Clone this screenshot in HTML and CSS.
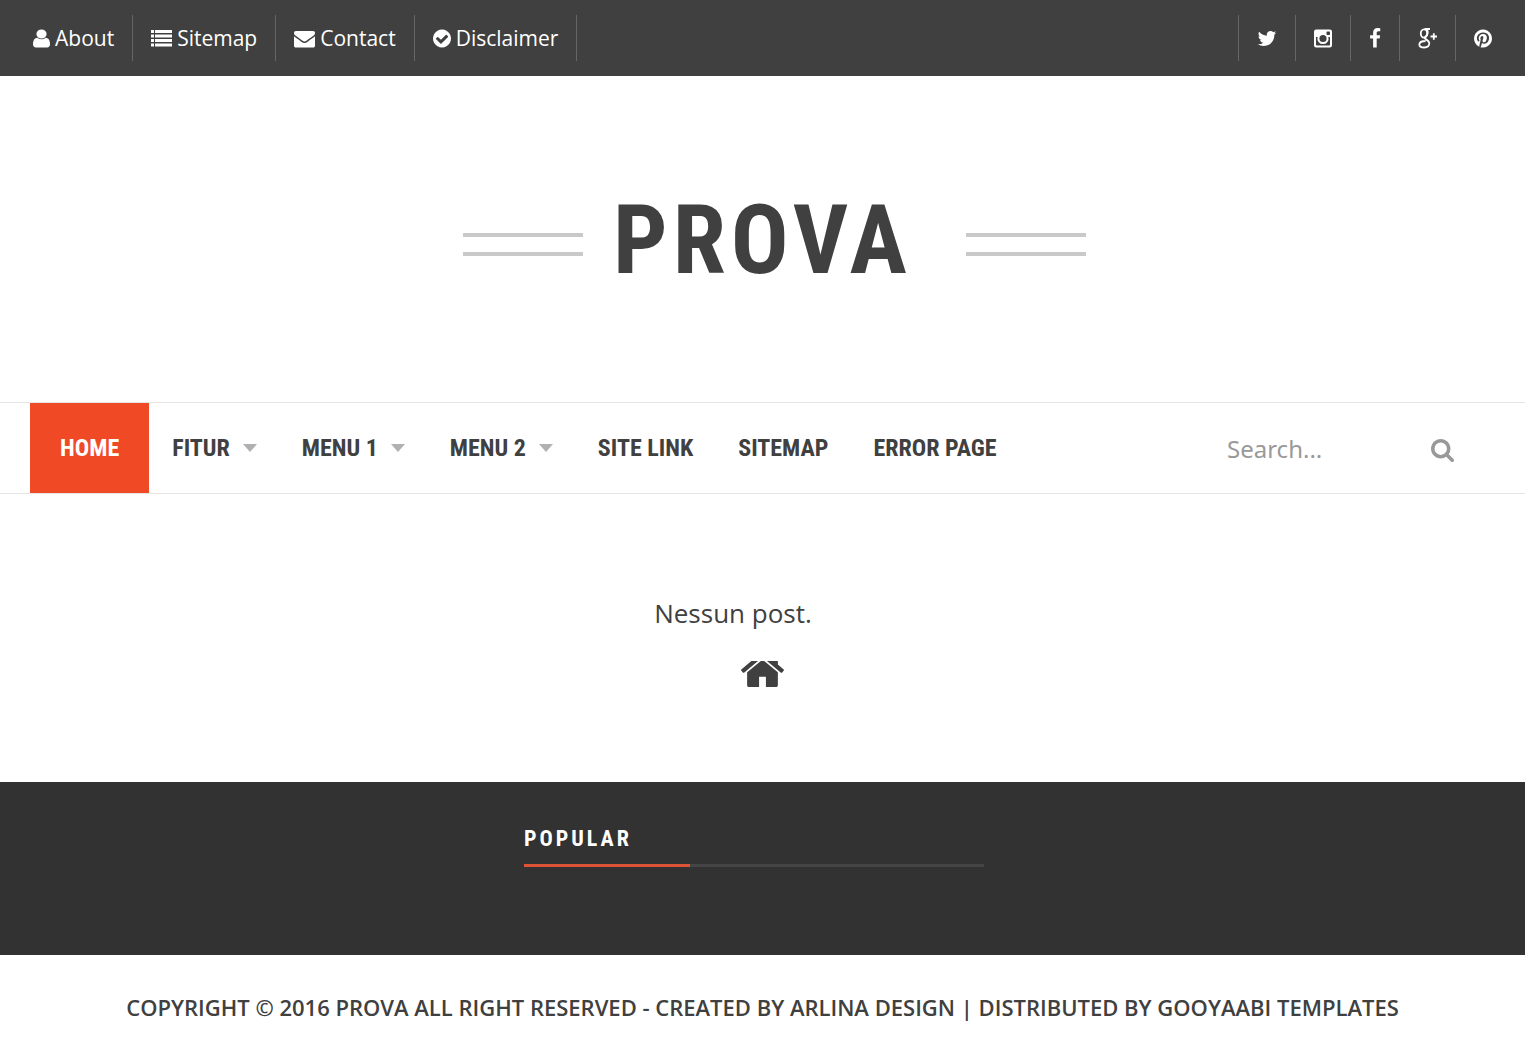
FILE: index.html
```
<!DOCTYPE html>
<html lang="it">

<head>
    <meta charset="UTF-8">
    <meta name="viewport" content="width=device-width, initial-scale=1.0">
    <title>Prova</title>
    <link rel="stylesheet" href="styles.css">
</head>

<body>
    <div class="topbar">
        <ul class="topbar__list topbar__list--pages">
            <li><a href="#">
                    <svg class="icon" width="17" height="21" viewBox="256 0 1280 1792" preserveAspectRatio="none">
                        <path d="M1536 1399q0 109-62.5 187t-150.5 78h-854q-88 0-150.5-78t-62.5-187q0-85 8.5-160.5t31.5-152 58.5-131 94-89 134.5-34.5q131 128 313 128t313-128q76 0 134.5 34.5t94 89 58.5 131 31.5 152 8.5 160.5zm-256-887q0 159-112.5 271.5t-271.5 112.5-271.5-112.5-112.5-271.5 112.5-271.5 271.5-112.5 271.5 112.5 112.5 271.5z" />
                    </svg>
                    About</a></li>
            <li><a href="#">
                    <svg class="icon" width="21" height="21" viewBox="0 0 21 21">
                        <path d="M0 2h3v3H0zM4 2h17v3H4zM0 6.500h3v3H0zM4 6.500h17v3H4zM0 11h3v3H0zM4 11h17v3H4zM0 15.500h3v3H0zM4 15.500h17v3H4z" />
                    </svg>
                    Sitemap</a></li>
            <li><a href="#">
                    <svg class="icon" width="21" height="21" viewBox="0 0 1792 1792">
                        <path d="M1792 710v794q0 66-47 113t-113 47h-1472q-66 0-113-47t-47-113v-794q44 49 101 87 362 246 497 345 57 42 92.5 65.5t94.5 48 110 24.5h2q51 0 110-24.5t94.5-48 92.5-65.5q170-123 498-345 57-39 100-87zm0-294q0 79-49 151t-122 123q-376 261-468 325-10 7-42.5 31t-54 38.5-52 32.5-57.5 27-50 9h-2q-23 0-50-9t-57.5-27-52-32.5-54-38.5-42.5-31q-91-64-262-182.5t-205-142.5q-62-42-117-115.5t-55-136.5q0-78 41.5-130t118.5-52h1472q65 0 112.5 47t47.5 113z" />
                    </svg>
                    Contact</a></li>
            <li><a href="#">
                    <svg class="icon" width="18" height="21" viewBox="128 0 1536 1792">
                        <path d="M1412 734q0-28-18-46l-91-90q-19-19-45-19t-45 19l-408 407-226-226q-19-19-45-19t-45 19l-91 90q-18 18-18 46 0 27 18 45l362 362q19 19 45 19 27 0 46-19l543-543q18-18 18-45zm252 162q0 209-103 385.5t-279.5 279.5-385.5 103-385.5-103-279.5-279.5-103-385.5 103-385.5 279.5-279.5 385.5-103 385.5 103 279.5 279.5 103 385.5z" />
                    </svg>
                    Disclaimer</a></li>
        </ul>
        <ul class="topbar__list topbar__list--social">
            <li><a href="#" aria-label="Twitter">
                    <svg class="icon" width="20" height="21" viewBox="64 0 1664 1792">
                        <path d="M1684 408q-67 98-162 167 1 14 1 42 0 130-38 259.5t-115.5 248.5-184.5 210.5-258 146-323 54.5q-271 0-496-145 35 4 78 4 225 0 401-138-105-2-188-64.5t-114-159.5q33 5 61 5 43 0 85-11-112-23-185.5-111.5t-73.5-205.5v-4q68 38 146 41-66-44-105-115t-39-154q0-88 44-163 121 149 294.5 238.5t371.5 99.5q-8-38-8-74 0-134 94.5-228.5t228.5-94.5q140 0 236 102 109-21 205-78-37 115-142 178 93-10 186-50z" />
                    </svg></a></li>
            <li><a href="#" aria-label="Instagram">
                    <svg class="icon" width="18" height="21" viewBox="0 0 18 21">
                        <path fill-rule="evenodd" d="M2.2 1.5h13.6A2.2 2.2 0 0 1 18 3.700v13.600a2.200 2.200 0 0 1-2.200 2.200H2.200A2.200 2.200 0 0 1 0 17.300V3.700A2.200 2.200 0 0 1 2.200 1.500zM2 9v7.700q0 .8.8.8h12.400q.8 0 .8-.8V9h-1.600a5.600 5.600 0 1 1-10.800 0zM13.200 3.600q-.7 0-.7.700v2q0 .7.700.7h2.100q.7 0 .7-.7v-2q0-.7-.7-.7zM9 6.900a3.600 3.600 0 1 0 0 7.200 3.600 3.600 0 0 0 0-7.200z" />
                    </svg></a></li>
            <li><a href="#" aria-label="Facebook">
                    <svg class="icon" width="12" height="21" viewBox="384 0 1024 1792">
                        <path d="M1343 12v264h-157q-86 0-116 36t-30 108v189h293l-39 296h-254v759h-306v-759h-255v-296h255v-218q0-186 104-288.500t277-102.500q147 0 228 12z" />
                    </svg></a></li>
            <li><a href="#" aria-label="Google Plus">
                    <svg class="icon icon--line" width="19" height="21" viewBox="0 0 19 21">
                        <ellipse cx="6" cy="5.500" rx="3.200" ry="4.200" />
                        <path d="M6.500 1h5.500M8.500 1.500q2 2 .8 5-.6 1.200-1.900 2.200-1.400 1.200.3 2.400 3.600 2 3.600 4.200 0 4-5.100 4.200-4.800 0-4.900-3 .2-3.500 6.300-3.500M12.500 8.500H19M15.800 5.300v6.400" />
                    </svg></a></li>
            <li><a href="#" aria-label="Pinterest">
                    <svg class="icon" width="18" height="21" viewBox="128 0 1536 1792">
                        <path d="M1664 896q0 209-103 385.5t-279.5 279.5-385.5 103q-111 0-218-32 59-93 78-164 9-34 54-211 20 39 73 67.5t114 28.5q121 0 216-68.5t147-188.5 52-270q0-114-59.5-214t-172.5-163-255-63q-105 0-196 29t-154.5 77-109 110.5-67 129.5-21.5 134q0 104 40 183t117 111q30 12 38-20 2-7 8-31t8-30q6-23-11-43-51-61-51-151 0-151 104.5-259.5t273.5-108.5q151 0 235.5 82t84.5 213q0 170-68.5 289t-175.5 119q-61 0-98-43.5t-23-104.5q8-35 26.5-93.5t30-103 11.5-75.5q0-50-27-83t-77-33q-62 0-105 57t-43 142q0 73 25 122l-99 418q-17 70-13 177-206-91-333-281t-127-423q0-209 103-385.5t279.5-279.5 385.5-103 385.5 103 279.5 279.5 103 385.5z" />
                    </svg></a></li>
        </ul>
    </div>

    <header class="header">
        <h1 class="header__title">PROVA</h1>
    </header>

    <nav class="nav">
        <ul class="nav__list">
            <li><a class="nav__link nav__link--active" href="#">HOME</a></li>
            <li><a class="nav__link nav__link--parent" href="#">FITUR</a></li>
            <li><a class="nav__link nav__link--parent" href="#">MENU 1</a></li>
            <li><a class="nav__link nav__link--parent" href="#">MENU 2</a></li>
            <li><a class="nav__link" href="#">SITE LINK</a></li>
            <li><a class="nav__link" href="#">SITEMAP</a></li>
            <li><a class="nav__link" href="#">ERROR PAGE</a></li>
        </ul>
        <form class="search">
            <input class="search__input" type="text" placeholder="Search..." aria-label="Search">
            <button class="search__button" type="submit" aria-label="Search">
                <svg class="icon" width="23" height="23" viewBox="64 128 1664 1664">
                    <path d="M1216 832q0-185-131.5-316.5t-316.5-131.5-316.5 131.5-131.5 316.5 131.5 316.5 316.5 131.5 316.5-131.5 131.5-316.5zm512 832q0 52-38 90t-90 38q-54 0-90-38l-343-342q-179 124-399 124-143 0-273.5-55.5t-225-150-150-225-55.5-273.5 55.5-273.5 150-225 225-150 273.5-55.5 273.5 55.5 225 150 150 225 55.5 273.5q0 220-124 399l343 343q37 37 37 90z" />
                </svg>
            </button>
        </form>
    </nav>

    <main class="content">
        <p class="content__message">Nessun post.</p>
        <a class="content__home" href="#" aria-label="Home">
            <svg class="icon" width="43" height="26" viewBox="90 566 1612 970">
                <path d="M1472 992v480q0 26-19 45t-45 19h-384v-384h-256v384h-384q-26 0-45-19t-19-45v-480q0-1 .5-3t.5-3l575-474 575 474q1 2 1 6zm223-69l-62 74q-8 9-21 11h-3q-13 0-21-7l-692-577-692 577q-12 8-24 7-13-2-21-11l-62-74q-8-10-7-23.5t11-21.5l719-599q32-26 76-26t76 26l244 204v-195q0-14 9-23t23-9h192q14 0 23 9t9 23v408l219 182q10 8 11 21.5t-7 23.5z" />
            </svg>
        </a>
    </main>

    <section class="widgets">
        <div class="widget"></div>
        <div class="widget">
            <h2 class="widget__title">POPULAR</h2>
        </div>
        <div class="widget"></div>
    </section>

    <footer class="footer">
        COPYRIGHT © 2016 <a href="#">PROVA</a> ALL RIGHT RESERVED - CREATED BY <a href="#">ARLINA DESIGN</a> |
        DISTRIBUTED BY <a href="#">GOOYAABI TEMPLATES</a>
    </footer>
</body>

</html>
```
FILE: styles.css
```
*,
::after,
::before {
    box-sizing: border-box;
}

body {
    margin: 0;
    background: #fff;
    color: #404040;
    font-family: "Open Sans", sans-serif;
    font-size: 21px;
}

ul {
    margin: 0;
    padding: 0;
    list-style: none;
}

a {
    color: inherit;
    text-decoration: none;
}

.icon {
    display: block;
    flex: none;
    fill: currentColor;
}

.icon--line {
    fill: none;
    stroke: currentColor;
    stroke-width: 1.8;
}

.topbar {
    display: flex;
    justify-content: space-between;
    padding: 15px;
    background: #404040;
    color: #fff;
}

.topbar__list {
    display: flex;
}

.topbar__list a {
    display: flex;
    align-items: center;
    gap: 5px;
    height: 46px;
    padding: 0 18px;
}

.topbar__list--pages li {
    border-right: 1px solid #666;
}

.topbar__list--social li {
    border-left: 1px solid #666;
}

.header {
    display: grid;
    grid-template-columns: 1fr auto 1fr;
    align-items: center;
    padding: 104px 0 102px;
}

.header::before,
.header::after {
    content: "";
    width: 120px;
    height: 23px;
    margin-top: 9px;
    border: solid #c9c9c9;
    border-width: 4px 0;
}

.header::before {
    justify-self: end;
    margin-right: 30px;
}

.header::after {
    margin-left: 54px;
}

.header__title {
    margin: 0;
    font-family: "Roboto Condensed", Roboto, sans-serif;
    font-size: 96px;
    font-weight: 700;
    line-height: 120px;
    letter-spacing: 5px;
}

.nav {
    display: flex;
    justify-content: space-between;
    padding: 0 60px 0 30px;
    border: solid #e5e5e5;
    border-width: 1px 0;
}

.nav__list {
    display: flex;
    gap: 1px;
}

.nav__link {
    display: flex;
    align-items: center;
    height: 90px;
    padding: 0 22px;
    font-family: "Roboto Condensed", Roboto, sans-serif;
    font-size: 24px;
    font-weight: 700;
}

.nav__link--active {
    padding: 0 30px;
    background: #f04925;
    color: #fff;
}

.nav__link--parent::after {
    content: "";
    margin-left: 13px;
    border: solid transparent;
    border-width: 8px 7px 0;
    border-top-color: #b0b0b0;
}

.search {
    display: flex;
    align-items: center;
    color: #999;
}

.search__input {
    width: 204px;
    padding: 0;
    border: 0;
    background: none;
    color: inherit;
    font-family: "Noto Sans", sans-serif;
    font-size: 24px;
}

.search__input::placeholder {
    color: inherit;
}

.search__button {
    padding: 4px 11px 0 0;
    border: 0;
    background: none;
    color: inherit;
}

.content {
    display: flex;
    flex-direction: column;
    align-items: center;
    padding: 99px 0 95px;
}

.content__message {
    margin: 0 59px 28px 0;
    font-size: 26px;
    line-height: 40px;
}

.widgets {
    display: grid;
    grid-template-columns: repeat(3, 1fr);
    gap: 34px;
    padding: 40px 47px 88px 30px;
    background: #323232;
    color: #fff;
}

.widget__title {
    margin: 0;
    font-family: "Roboto Condensed", Roboto, sans-serif;
    font-size: 22px;
    line-height: 34px;
    letter-spacing: 3px;
}

/* underline with an accent at its start */
.widget__title::after {
    content: "";
    display: block;
    height: 3px;
    margin-top: 8px;
    background: linear-gradient(to right, #dd5335 36%, #444 36%);
}

.footer {
    padding: 34px 30px 35px;
    font-size: 22px;
    font-weight: 600;
    line-height: 36px;
    text-align: center;
}
```
